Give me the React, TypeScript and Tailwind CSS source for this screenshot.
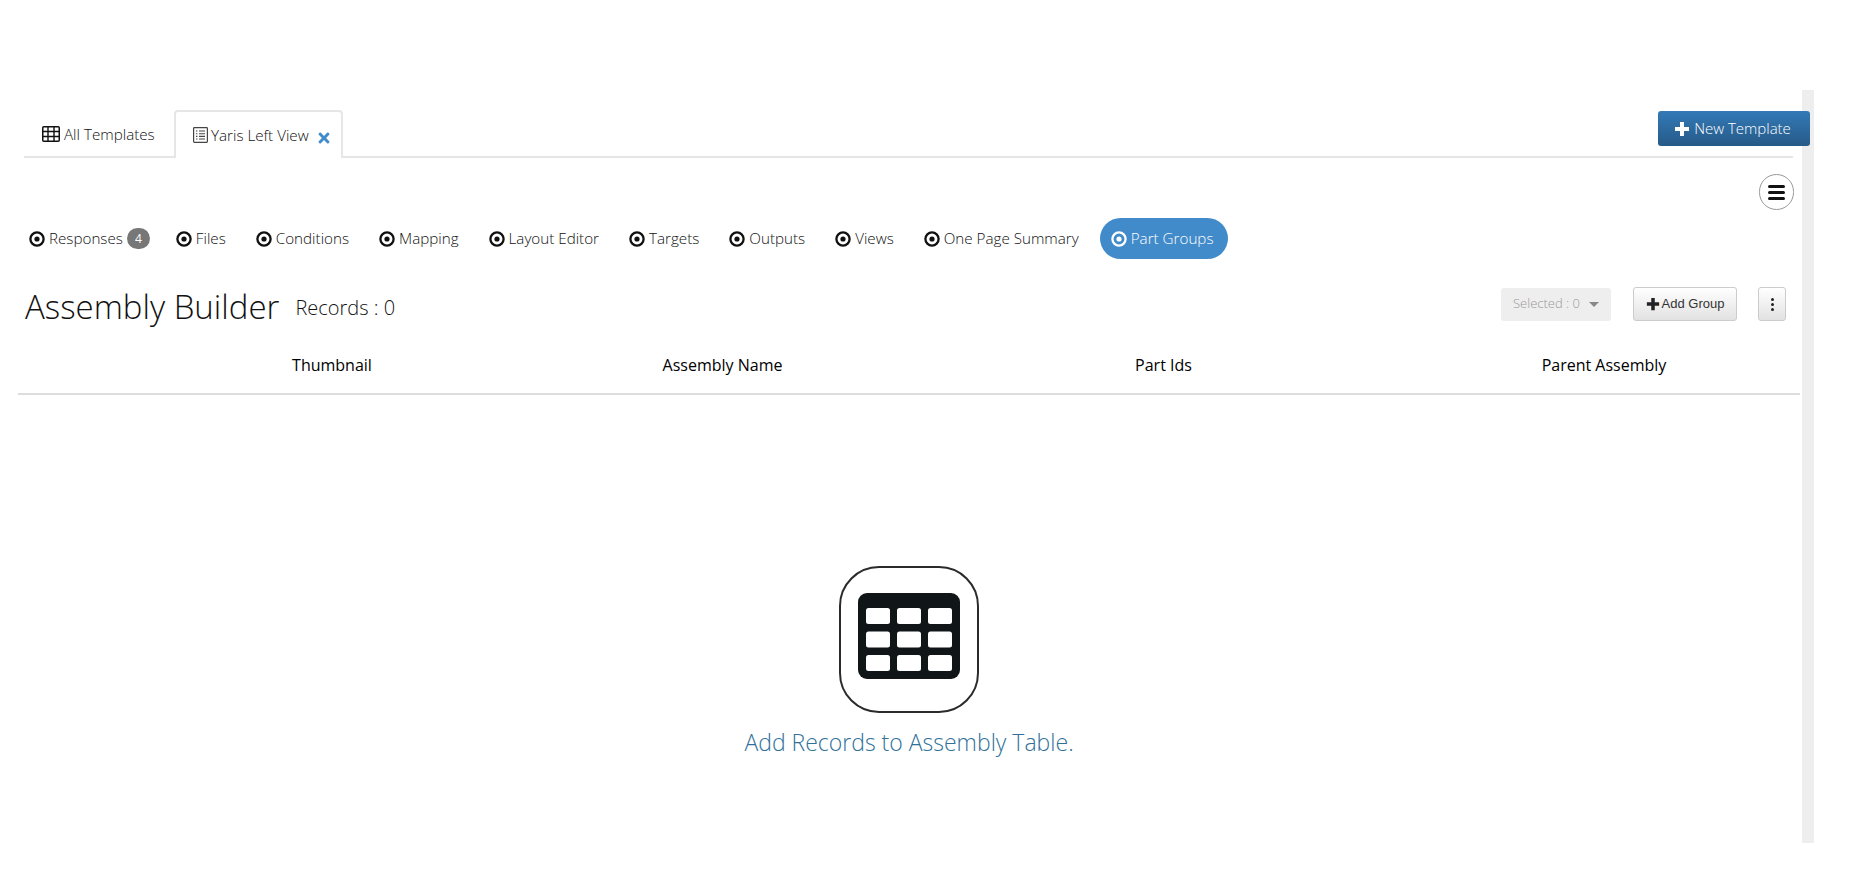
import { FaTimes } from "react-icons/fa";

const pills = ["Files", "Conditions", "Mapping", "Layout Editor", "Targets", "Outputs", "Views", "One Page Summary"];

function HeaderCell({ label, className }: { label: string; className?: string }) {
  return <div className={`text-center ${className ?? ""}`}>{label}</div>;
}

function DotIcon({ className }: { className?: string }) {
  return (
    <svg width="16" height="16" viewBox="0 0 16 16" className={className} aria-hidden>
      <circle cx="8" cy="8" r="6.6" fill="none" stroke="currentColor" strokeWidth="2.3" />
      <circle cx="8" cy="8" r="2.6" fill="currentColor" />
    </svg>
  );
}

function PlusIcon({ size, className }: { size: number; className?: string }) {
  return (
    <svg width={size} height={size} viewBox="0 0 16 16" className={className} aria-hidden>
      <path d="M6 1h4v5h5v4h-5v5H6v-5H1V6h5z" fill="currentColor" />
    </svg>
  );
}

function GridIcon() {
  return (
    <svg width="18" height="16" viewBox="0 0 18 16" className="mr-[4px] text-[#111]" aria-hidden>
      <rect x="0.75" y="0.75" width="16.5" height="14.5" rx="1" fill="none" stroke="currentColor" strokeWidth="1.5" />
      <path d="M0 5.5h18M0 10.5h18M6 1v14M12 1v14" stroke="currentColor" strokeWidth="1.4" />
    </svg>
  );
}

function ListIcon() {
  return (
    <svg width="15" height="16" viewBox="0 0 15 16" className="mr-[3px] text-[#444]" aria-hidden>
      <rect x="0.6" y="0.6" width="13.8" height="14.8" rx="0.8" fill="none" stroke="currentColor" strokeWidth="1.2" />
      <path d="M3 4h1.4M3 6.7h1.4M3 9.4h1.4M3 12h1.4M6 4h6M6 6.7h6M6 9.4h6M6 12h6" stroke="currentColor" strokeWidth="1.1" />
    </svg>
  );
}

function TableGlyph() {
  const xs = [8, 39, 70];
  const ys = [15, 38.5, 62];
  return (
    <svg width="102" height="86" viewBox="0 0 102 86" aria-hidden>
      <rect width="102" height="86" rx="9" fill="#101518" />
      {ys.map((y) =>
        xs.map((x) => <rect key={`${x}-${y}`} x={x} y={y} width="24" height="16" rx="2.5" fill="#fff" />),
      )}
    </svg>
  );
}

export default function App() {
  return (
    <div className="relative h-[877px] w-full overflow-hidden bg-white font-['Open_Sans',sans-serif] font-light text-[#111]">
      <div className="flex pt-[90px]">
        <main className="h-[753px] w-[1802px]">
          <div className="ml-[24px] mr-[9px] mt-[22px] flex h-[46px] items-end border-b-2 border-[#e6e6e6]">
            <div className="-mb-[2px] flex h-[48px] w-[150px] items-center pl-[18px] text-[15.2px]">
              <GridIcon />
              All Templates
            </div>
            <div className="-mb-[2px] flex h-[48px] w-[169px] items-center rounded-t border-2 border-b-0 border-[#e6e6e6] bg-white pl-[17px] text-[15.2px]">
              <ListIcon />
              Yaris Left View
              <FaTimes className="ml-[7px] mt-[5px] text-[16px] text-[#428bca]" />
            </div>
          </div>

          <div className="flex justify-end pr-[8px] pt-[16px]">
            <button className="flex h-[36px] w-[35px] items-center justify-center rounded-full border border-[#999] bg-white">
              <span className="flex flex-col gap-[3px]">
                <span className="block h-[3px] w-[17px] rounded-sm bg-[#111]" />
                <span className="block h-[3px] w-[17px] rounded-sm bg-[#111]" />
                <span className="block h-[3px] w-[17px] rounded-sm bg-[#111]" />
              </span>
            </button>
          </div>

          <nav className="ml-[17px] mt-[8px] flex h-[41px] items-center text-[15.2px]">
            <div className="flex h-full items-center pl-[12px] pr-[11px]">
              <DotIcon className="mr-[4px] text-[#111]" />
              Responses
              <span className="ml-[4px] flex h-[21px] w-[23px] items-center justify-center rounded-full bg-[#777] text-xs font-normal text-white">
                4
              </span>
            </div>
            {pills.map((p) => (
              <div key={p} className="ml-[3px] flex h-full items-center pl-[12px] pr-[15px]">
                <DotIcon className="mr-[4px] text-[#111]" />
                {p}
              </div>
            ))}
            <div className="ml-[6px] flex h-full items-center rounded-[21px] bg-[#428bca] pl-[11px] pr-[15px] text-white">
              <DotIcon className="mr-[4px]" />
              Part Groups
            </div>
          </nav>

          <div className="ml-[25px] mr-[16px] mt-[24px] flex h-[46px] items-center">
            <h1 className="text-[33px] leading-none">Assembly Builder</h1>
            <span className="ml-[16px] mt-[3px] text-xl">Records : 0</span>
            <div className="-mt-[4px] ml-auto flex items-center font-['Liberation_Sans',sans-serif] font-normal">
              <div className="flex h-[33px] w-[110px] items-center justify-center rounded-[3px] bg-[#eeeeee] font-['Open_Sans',sans-serif] text-[13px] font-light text-[#999]">
                Selected : 0
                <span className="ml-[9px] h-0 w-0 border-x-[5px] border-t-[5px] border-x-transparent border-t-[#888]" />
              </div>
              <button className="ml-[22px] flex h-[34px] w-[104px] items-center justify-center rounded-[3px] border border-[#ccc] bg-gradient-to-b from-white to-[#e2e2e2] text-[13px] text-[#333]">
                <PlusIcon size={14} className="mr-[2px] text-[#222]" />
                Add Group
              </button>
              <button className="ml-[21px] flex h-[34px] w-[28px] flex-col items-center justify-center gap-[2px] rounded-[3px] border border-[#ccc] bg-gradient-to-b from-white to-[#e2e2e2]">
                <span className="block h-[3px] w-[3px] rounded-full bg-[#222]" />
                <span className="block h-[3px] w-[3px] rounded-full bg-[#222]" />
                <span className="block h-[3px] w-[3px] rounded-full bg-[#222]" />
              </button>
            </div>
          </div>

          <div className="ml-[18px] mt-[12px] grid h-[54px] w-[1782px] grid-cols-[144px_340px_441px_441px_416px] items-center border-b-2 border-[#dddddd] pb-[5px] text-base font-normal text-black">
            <div />
            <HeaderCell label="Thumbnail" />
            <HeaderCell label="Assembly Name" />
            <HeaderCell label="Part Ids" />
            <HeaderCell label="Parent Assembly" className="pl-[24px]" />
          </div>

          <div className="ml-[18px] mt-[171px] flex w-[1782px] flex-col items-center">
            <div className="flex h-[147px] w-[140px] items-center justify-center rounded-[40px] border-2 border-[#2b2b2b] pb-[7px]">
              <TableGlyph />
            </div>
            <p className="mt-[14px] text-[23px] leading-[30px] text-[#2f7199]">Add Records to Assembly Table.</p>
          </div>
        </main>
        <div className="h-[753px] w-[12px] bg-[#eeeeee]" />
      </div>

      <button className="absolute left-[1658px] top-[111px] flex h-[35px] w-[152px] items-center justify-center rounded-[3px] bg-gradient-to-b from-[#337ab7] to-[#265a88] pr-[3px] text-[15px] text-white">
        <PlusIcon size={16} className="mr-[4px]" />
        New Template
      </button>
    </div>
  );
}
